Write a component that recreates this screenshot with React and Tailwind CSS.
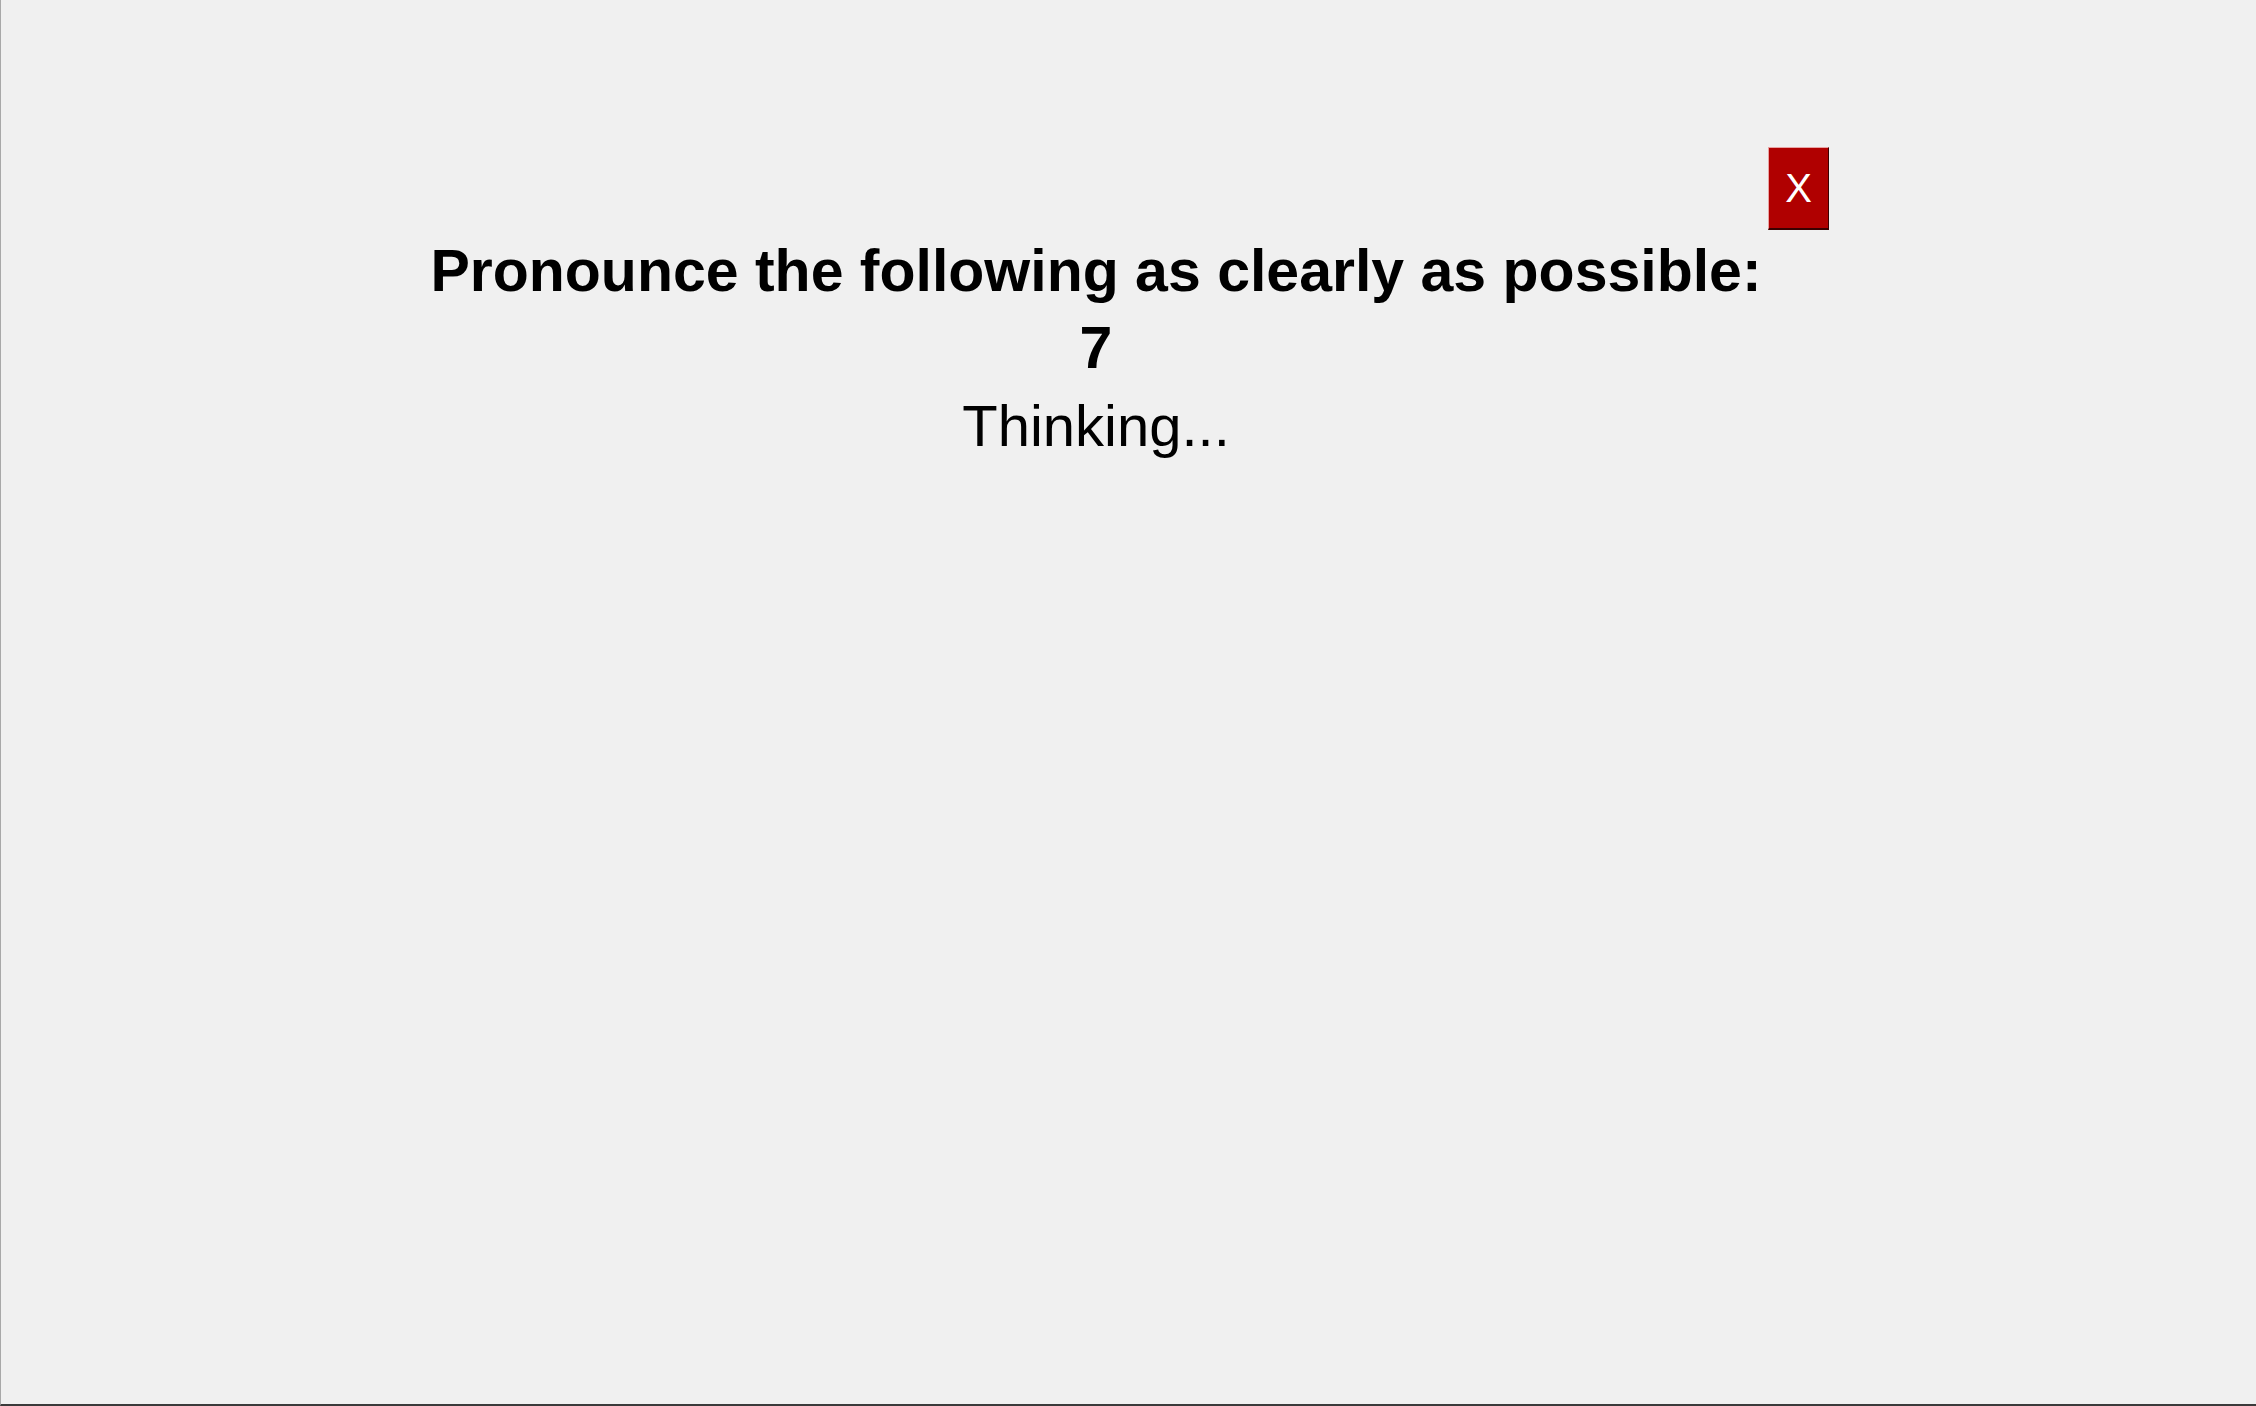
import React from "react";

// PronouncePrompt - speech prompt with close button, target word and status line
const PronouncePrompt = ({ word, status }) => {
  return (
    <div className="ml-[362px] w-[1466px] pt-[147px] flex flex-col items-center text-black font-['Liberation_Sans',Arial,sans-serif]">
      <div className="w-full flex flex-row justify-end mb-[3px]">
        <button className="w-[61px] h-[83px] bg-[#b00000] text-white text-[40px] leading-none border border-t-[#e9a3a3] border-l-[#e9a3a3] border-r-[#3a0000] border-b-2 border-b-[#3a0000] flex items-center justify-center">
          X
        </button>
      </div>
      <h1 className="text-[59px] leading-[77px] font-bold text-center">
        Pronounce the following as clearly as possible:
      </h1>
      <p className="text-[59px] leading-[77px] font-bold text-center">{word}</p>
      <p className="text-[58px] leading-[77px] text-center">{status}</p>
    </div>
  );
};

export default function App() {
  return (
    <div className="w-[2256px] h-[1406px] bg-[#f0f0f0] border-l border-l-[#a8a8a8] border-b-2 border-b-[#3a3a3a] overflow-hidden">
      <PronouncePrompt word="7" status="Thinking..." />
    </div>
  );
}
